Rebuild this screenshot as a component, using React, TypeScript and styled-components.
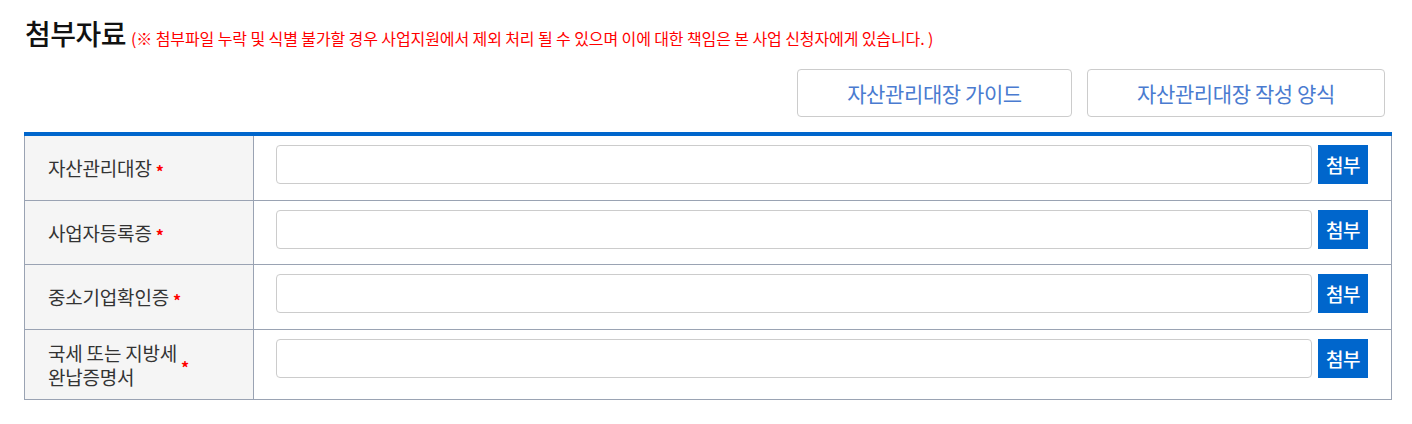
import styled, { createGlobalStyle } from 'styled-components'

const GlobalStyle = createGlobalStyle`
  body {
    margin: 0;
    background: #fff;
    font-family: 'Noto Sans CJK KR', 'Noto Sans', sans-serif;
    color: #333;
  }
`

const Wrap = styled.div`
  padding: 14px 20px 0 24px;
`

const TitleRow = styled.div`
  display: flex;
  align-items: baseline;
  gap: 5px;
  padding-left: 1px;
`

const Title = styled.h3`
  margin: 0;
  font-size: 28px;
  line-height: 38px;
  font-weight: 500;
  color: #111;
  letter-spacing: -0.5px;
`

const Notice = styled.span`
  font-size: 16px;
  color: #ff0000;
  letter-spacing: -0.1px;
`

const GuideBar = styled.div`
  display: flex;
  justify-content: flex-end;
  gap: 15px;
  padding: 17px 7px 15px 0;
`

const GuideButton = styled.button<{ $w: number }>`
  width: ${(p) => p.$w}px;
  height: 48px;
  border: 1px solid #ccc;
  border-radius: 4px;
  background: #fff;
  color: #4a7bd0;
  font-family: inherit;
  font-size: 21px;
  letter-spacing: -0.4px;
  cursor: pointer;
`

const Table = styled.table`
  width: 100%;
  table-layout: fixed;
  border-collapse: collapse;
  border-top: 4px solid #0066cc;
`

const Row = styled.tr`
  border-bottom: 1px solid #9aa3b3;
`

const Th = styled.th`
  width: 205px;
  height: 64px;
  padding: 0 0 0 23px;
  background: #f5f5f5;
  border-left: 1px solid #9aa3b3;
  border-right: 1px solid #9aa3b3;
  text-align: left;
  font-weight: 400;
  font-size: 19px;
  color: #333;
`

const Label = styled.div`
  display: flex;
  align-items: center;
  gap: 4px;
  line-height: 24px;
`

const LabelText = styled.span`
  white-space: pre-line;
  letter-spacing: -0.2px;
`

const Star = styled.span`
  color: #ff0000;
  font-size: 16px;
  font-weight: 700;
  padding-top: 5px;
`

const Td = styled.td`
  padding: 9px 23px 0 22px;
  vertical-align: top;
  border-right: 1px solid #9aa3b3;
`

const Field = styled.div`
  display: flex;
  gap: 6px;
`

const FileInput = styled.input`
  flex: 1;
  height: 39px;
  box-sizing: border-box;
  border: 1px solid #ccc;
  border-radius: 4px;
  background: #fff;
`

const AttachButton = styled.button`
  width: 50px;
  height: 39px;
  border: 0;
  background: #0066cc;
  color: #fff;
  font-family: inherit;
  font-size: 19px;
  font-weight: 500;
  letter-spacing: -0.5px;
  padding: 0;
`

const rows = [
  { label: '자산관리대장', h: 64 },
  { label: '사업자등록증', h: 63 },
  { label: '중소기업확인증', h: 64 },
  { label: '국세 또는 지방세\n완납증명서', h: 69 },
]

export default function App() {
  return (
    <>
      <GlobalStyle />
      <Wrap>
        <TitleRow>
          <Title>첨부자료</Title>
          <Notice>
            (※ 첨부파일 누락 및 식별 불가할 경우 사업지원에서 제외 처리 될 수 있으며 이에 대한 책임은 본 사업 신청자에게 있습니다. )
          </Notice>
        </TitleRow>
        <GuideBar>
          <GuideButton $w={275}>자산관리대장 가이드</GuideButton>
          <GuideButton $w={298}>자산관리대장 작성 양식</GuideButton>
        </GuideBar>
        <Table>
          <tbody>
            {rows.map((r) => (
              <Row key={r.label}>
                <Th style={{ height: r.h }}>
                  <Label>
                    <LabelText>{r.label}</LabelText>
                    <Star>*</Star>
                  </Label>
                </Th>
                <Td>
                  <Field>
                    <FileInput type="text" readOnly />
                    <AttachButton>첨부</AttachButton>
                  </Field>
                </Td>
              </Row>
            ))}
          </tbody>
        </Table>
      </Wrap>
    </>
  )
}
